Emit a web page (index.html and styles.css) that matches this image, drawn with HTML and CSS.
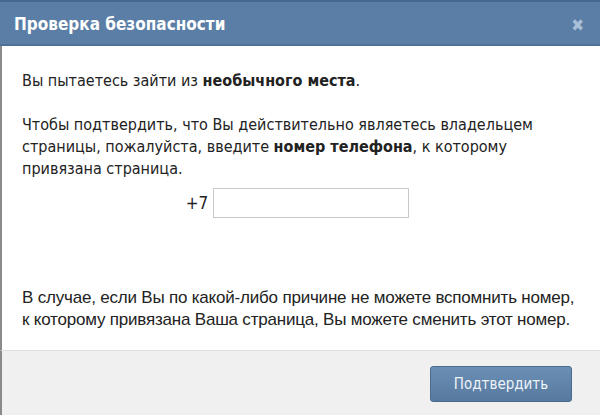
FILE: index.html
```html
<!DOCTYPE html>
<html lang="ru">
<head>
<meta charset="utf-8">
<link rel="stylesheet" href="styles.css">
</head>
<body>
<div class="dialog">
  <div class="header">
    <div class="title">Проверка безопасности</div>
    <div class="close">✖</div>
  </div>
  <div class="body">
    <p class="p1">Вы пытаетесь зайти из <b>необычного места</b>.</p>
    <p class="p2">Чтобы подтвердить, что Вы действительно являетесь владельцем страницы, пожалуйста, введите <b>номер телефона</b>, к которому привязана страница.</p>
    <div class="phone">
      <span class="code">+7</span>
      <div class="input"></div>
    </div>
    <p class="p3">В случае, если Вы по какой-либо причине не можете вспомнить номер, к которому привязана Ваша страница, Вы можете сменить этот номер.</p>
  </div>
  <div class="footer">
    <div class="button">Подтвердить</div>
  </div>
</div>
</body>
</html>
```

FILE: styles.css
```css
html, body {
  margin: 0;
  padding: 0;
  background: #fff;
}
.dialog {
  width: 600px;
  height: 415px;
  display: flex;
  flex-direction: column;
  font-family: "DejaVu Sans Condensed", "DejaVu Sans", sans-serif;
  color: #222;
}
.header {
  height: 42px;
  background: #5a7ea5;
  border-top: 2px solid #45688f;
  border-bottom: 2px solid #4d7198;
  display: flex;
  align-items: center;
  justify-content: space-between;
  padding: 0 16px 0 14px;
  flex-shrink: 0;
}
.title {
  color: #fff;
  font-weight: bold;
  font-size: 17px;
  padding-top: 1px;
}
.close {
  color: #a8bfd8;
  font-size: 17px;
  font-weight: bold;
  padding-top: 3px;
}
.body {
  flex: 1;
  border-left: 2px solid #8a8a8a;
  padding: 0 20px;
  font-size: 16px;
  line-height: 22px;
}
.body p {
  margin: 0;
}
.body .p1 {
  margin-top: 24px;
}
.body .p2 {
  margin-top: 22px;
}
.phone {
  display: flex;
  align-items: center;
  justify-content: center;
  gap: 5px;
  margin-top: 8px;
  padding-right: 7px;
}
.code {
  font-size: 17px;
}
.input {
  width: 194px;
  height: 28px;
  border: 1px solid #c9c9c9;
  background: #fff;
}
.body .p3 {
  margin-top: 69px;
  max-width: 554px;
  font-family: "Liberation Sans", Arial, sans-serif;
  font-size: 17px;
  letter-spacing: -0.2px;
}
.footer {
  height: 64px;
  flex-shrink: 0;
  background: #f0f0f0;
  border-top: 1px solid #e0e0e0;
  border-left: 2px solid #8a8a8a;
  display: flex;
  align-items: center;
  justify-content: flex-end;
  padding-right: 28px;
}
.button {
  width: 140px;
  height: 34px;
  border: 1px solid #4a6a8e;
  border-radius: 3px;
  background: linear-gradient(#6a8fb5, #58799f);
  color: #eef3f8;
  font-size: 15px;
  display: flex;
  align-items: center;
  justify-content: center;
  margin-top: 2px;
}
```
